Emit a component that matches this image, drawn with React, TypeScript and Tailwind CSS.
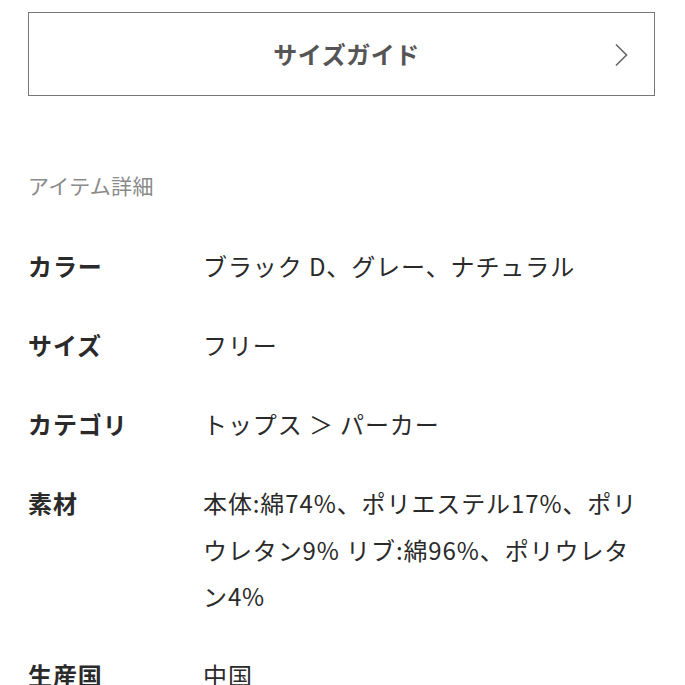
import React from "react";

const rows: { label: string; value: string[] }[] = [
  { label: "カラー", value: ["ブラック D、グレー、ナチュラル"] },
  { label: "サイズ", value: ["フリー"] },
  { label: "カテゴリ", value: ["トップス ＞ パーカー"] },
  {
    label: "素材",
    value: ["本体:綿74%、ポリエステル17%、ポリ", "ウレタン9% リブ:綿96%、ポリウレタ", "ン4%"],
  },
  { label: "生産国", value: ["中国"] },
];

export default function App() {
  return (
    <div
      className="w-[685px] h-[685px] overflow-hidden bg-white"
      style={{ fontFamily: '"Noto Sans CJK JP", "Noto Sans", sans-serif' }}
    >
      <div className="pl-[28px] pr-[30px] pt-[12px]">
        <div className="relative flex h-[84px] items-center justify-center border-[1.5px] border-[#777] pl-[10px]">
          <span className="text-[24px] font-bold text-[#555] tracking-[0.5px]">サイズガイド</span>
          <svg
            className="absolute right-[26px] top-[30px]"
            width="14"
            height="24"
            viewBox="0 0 14 24"
            fill="none"
          >
            <path d="M2 1.5 L12.5 12 L2 22.5" stroke="#666" strokeWidth="1.6" />
          </svg>
        </div>
        <div className="mt-[74px] text-[21px] text-[#8a8a8a] leading-[30px] tracking-[0.3px]">アイテム詳細</div>
        <div className="mt-[43px] flex flex-col gap-[32.5px]">
          {rows.map((r) => (
            <div key={r.label} className="flex text-[24px] leading-[46.5px] text-[#2a2a2a] tracking-[0.9px]">
              <div className="w-[175px] shrink-0 font-bold">{r.label}</div>
              <div>
                {r.value.map((v, i) => (
                  <div key={i}>{v}</div>
                ))}
              </div>
            </div>
          ))}
        </div>
      </div>
    </div>
  );
}
